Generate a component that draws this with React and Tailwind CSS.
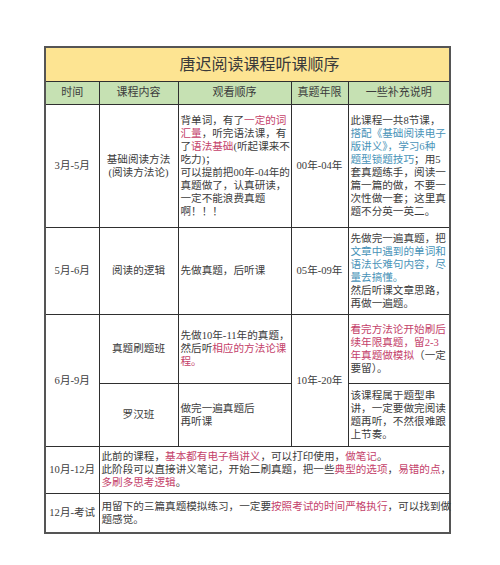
import React from "react";

const R = ({ children }) => <span className="text-[#c4416a]">{children}</span>;
const B = ({ children }) => <span className="text-[#4893b8]">{children}</span>;

const Lines = ({ lines }) => (
  <div className="flex flex-col">
    {lines.map((l, i) => (
      <div key={i} className="whitespace-nowrap">{l}</div>
    ))}
  </div>
);

export default function App() {
  const bd = "border border-[#2f2f2f]";
  return (
    <div className="w-[500px] h-[565px] bg-white pt-[46px] pl-[44px]" style={{ fontFamily: '"Liberation Serif", "Noto Sans CJK SC", serif' }}>
      <table className="table-fixed border-collapse w-[405px] text-[10.6px] leading-[13px] text-[#3c3c3c] border-2 border-[#555]">
        <colgroup>
          <col className="w-[54px]" />
          <col className="w-[79px]" />
          <col className="w-[113px]" />
          <col className="w-[57px]" />
          <col className="w-[102px]" />
        </colgroup>
        <tbody>
          <tr className="h-[34px]">
            <td colSpan={5} className={`${bd} bg-[#fde492] text-center text-[16px] pl-6 text-[#3a3a3a]`}>唐迟阅读课程听课顺序</td>
          </tr>
          <tr className="h-[23px] bg-[#c6e1b3] text-[11px]">
            <td className={`${bd} text-center`}>时间</td>
            <td className={`${bd} text-center`}>课程内容</td>
            <td className={`${bd} text-center`}>观看顺序</td>
            <td className={`${bd} text-center`}>真题年限</td>
            <td className={`${bd} text-center`}>一些补充说明</td>
          </tr>
          <tr className="h-[123px]">
            <td className={`${bd} text-center`}>3月-5月</td>
            <td className={`${bd} text-center`}>
              <div>基础阅读方法</div>
              <div>(阅读方法论)</div>
            </td>
            <td className={`${bd} px-[2px] align-middle`}>
              <Lines
                lines={[
                  <>背单词，有了<R>一定的词</R></>,
                  <><R>汇量</R>，听完语法课，有</>,
                  <>了<R>语法基础</R>(听起课来不</>,
                  <>吃力)；</>,
                  <>可以提前把00年-04年的</>,
                  <>真题做了，认真研读，</>,
                  <>一定不能浪费真题</>,
                  <>啊！！！</>,
                ]}
              />
            </td>
            <td className={`${bd} text-center`}>00年-04年</td>
            <td className={`${bd} px-[2px]`}>
              <Lines
                lines={[
                  <>此课程一共8节课，</>,
                  <><B>搭配《基础阅读电子</B></>,
                  <><B>版讲义》，学习6种</B></>,
                  <><B>题型锁题技巧</B>；用5</>,
                  <>套真题练手，阅读一</>,
                  <>篇一篇的做，不要一</>,
                  <>次性做一套；这里真</>,
                  <>题不分英一英二。</>,
                ]}
              />
            </td>
          </tr>
          <tr className="h-[87px]">
            <td className={`${bd} text-center`}>5月-6月</td>
            <td className={`${bd} text-center`}>阅读的逻辑</td>
            <td className={`${bd} px-[2px]`}>先做真题，后听课</td>
            <td className={`${bd} text-center`}>05年-09年</td>
            <td className={`${bd} px-[2px]`}>
              <Lines
                lines={[
                  <>先做完一遍真题，把</>,
                  <><B>文章中遇到的单词和</B></>,
                  <><B>语法长难句内容，尽</B></>,
                  <><B>量去搞懂。</B></>,
                  <>然后听课文章思路，</>,
                  <>再做一遍题。</>,
                ]}
              />
            </td>
          </tr>
          <tr className="h-[69px]">
            <td rowSpan={2} className={`${bd} text-center`}>6月-9月</td>
            <td className={`${bd} text-center`}>真题刷题班</td>
            <td className={`${bd} px-[2px]`}>
              <Lines
                lines={[
                  <>先做10年-11年的真题，</>,
                  <>然后听<R>相应的方法论课</R></>,
                  <><R>程。</R></>,
                ]}
              />
            </td>
            <td rowSpan={2} className={`${bd} text-center`}>10年-20年</td>
            <td className={`${bd} px-[2px]`}>
              <Lines
                lines={[
                  <><R>看完方法论开始刷后</R></>,
                  <><R>续年限真题，留2-3</R></>,
                  <><R>年真题做模拟</R>（一定</>,
                  <>要留）。</>,
                ]}
              />
            </td>
          </tr>
          <tr className="h-[63px]">
            <td className={`${bd} text-center`}>罗汉班</td>
            <td className={`${bd} px-[2px]`}>
              <Lines lines={[<>做完一遍真题后</>, <>再听课</>]} />
            </td>
            <td className={`${bd} px-[2px]`}>
              <Lines
                lines={[
                  <>该课程属于题型串</>,
                  <>讲，一定要做完阅读</>,
                  <>题再听，不然很难跟</>,
                  <>上节奏。</>,
                ]}
              />
            </td>
          </tr>
          <tr className="h-[47px]">
            <td className={`${bd} text-center`}>10月-12月</td>
            <td colSpan={4} className={`${bd} px-[2px]`}>
              <Lines
                lines={[
                  <>此前的课程，<R>基本都有电子档讲义</R>，可以打印使用，<R>做笔记</R>。</>,
                  <>此阶段可以直接讲义笔记，开始二刷真题，把一些<R>典型的选项</R>，<R>易错的点</R>，</>,
                  <><R>多刷多思考逻辑</R>。</>,
                ]}
              />
            </td>
          </tr>
          <tr className="h-[40px]">
            <td className={`${bd} text-center`}>12月-考试</td>
            <td colSpan={4} className={`${bd} px-[2px]`}>
              <Lines
                lines={[
                  <>用留下的三篇真题模拟练习，一定要<R>按照考试的时间严格执行</R>，可以找到做</>,
                  <>题感觉。</>,
                ]}
              />
            </td>
          </tr>
        </tbody>
      </table>
    </div>
  );
}
